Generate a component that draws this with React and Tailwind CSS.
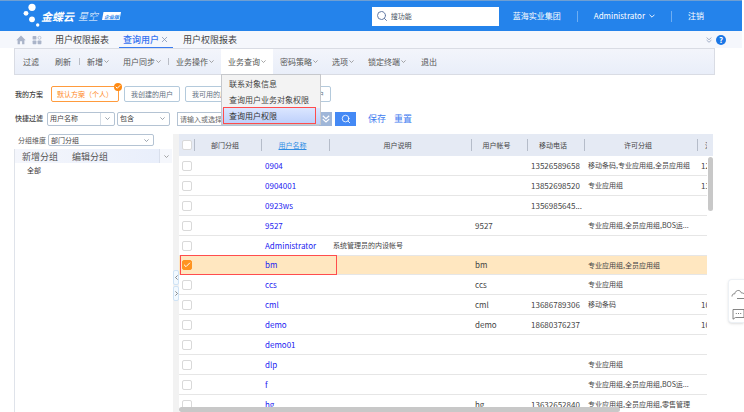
import { Search, X, Check } from 'lucide-react'
import clsx from 'clsx'

const MENUS = [
  { label: '过滤' },
  { label: '刷新', divider: true },
  { label: '新增', arrow: true },
  { label: '用户同步', arrow: true, divider: true },
  { label: '业务操作', arrow: true },
  { label: '业务查询', arrow: true, items: ['联系对象信息', '查询用户业务对象权限', '查询用户权限'] },
  { label: '密码策略', arrow: true },
  { label: '选项', arrow: true },
  { label: '锁定终端', arrow: true },
  { label: '退出' },
]

const USERS = [
  { name: '0904', phone: '13526589658', group: '移动条码,专业应用组,全员应用组', extra: '12' },
  { name: '0904001', phone: '13852698520', group: '专业应用组', extra: '13' },
  { name: '0923ws', phone: '1356985645...' },
  { name: '9527', account: '9527', group: '专业应用组,全员应用组,BOS运...' },
  { name: 'Administrator', desc: '系统管理员的内设帐号' },
  { name: 'bm', account: 'bm', group: '专业应用组,全员应用组', selected: true },
  { name: 'ccs', account: 'ccs', group: '专业应用组' },
  { name: 'cml', account: 'cml', phone: '13686789306', group: '移动条码', extra: '10' },
  { name: 'demo', account: 'demo', phone: '18680376237', extra: '10' },
  { name: 'demo01' },
  { name: 'dlp', group: '专业应用组' },
  { name: 'f', group: '专业应用组,全员应用组,BOS运...' },
  { name: 'hg', account: 'hg', phone: '13632652840', group: '专业应用组,全员应用组,零售管理' },
]

function Arrow({ className }) {
  return (
    <svg viewBox="0 0 10 6" className={clsx('shrink-0', className)} fill="none" stroke="currentColor" strokeWidth="1.5">
      <path d="M.8.8 5 5 9.2.8" />
    </svg>
  )
}

function DoubleArrow({ className }) {
  return (
    <svg viewBox="0 0 10 10" className={clsx('shrink-0', className)} fill="none" stroke="currentColor" strokeWidth="1.5">
      <path d="M1 1 5 4.6 9 1M1 5.2 5 8.8 9 5.2" />
    </svg>
  )
}

function Logo() {
  return (
    <div className="flex items-center text-white">
      <svg viewBox="0 0 18 26" className="w-[18px] h-[26px]" fill="currentColor">
        <circle cx="9" cy="4.3" r="3.6" />
        <circle cx="3" cy="10.3" r="2.4" />
        <circle cx="9" cy="16.3" r="2.9" />
        <circle cx="14.7" cy="22" r="1.7" />
      </svg>
      <span className="text-[11px] font-bold italic">金蝶云</span>
      <span className="ml-1 text-[10px] font-light italic">星空</span>
      <span className="ml-1 flex h-2 w-[19px] items-center justify-center bg-white text-[5px] font-bold italic text-[#2483eb] [clip-path:polygon(8%_0,100%_0,92%_100%,0_100%)]">
        企业版
      </span>
    </div>
  )
}

function Header() {
  return (
    <header className="mr-0.5 flex h-[31px] shrink-0 items-center border-t border-[#6f9fd2] bg-[#2483eb] pl-[23px] text-[8px] text-white">
      <Logo />
      <label className="ml-auto flex h-[19px] w-[127px] items-center bg-white pl-1">
        <Search className="size-3 shrink-0 text-[#647ba5]" />
        <input aria-label="搜功能" placeholder="搜功能"
               className="ml-[3px] w-full min-w-0 text-[7px] text-gray-700 outline-none placeholder:text-gray-600" />
      </label>
      <span className="ml-[14px]">蓝海实业集团</span>
      <span className="ml-4 h-[11px] w-px bg-[#6eaef2]" />
      <button className="ml-4 flex items-center gap-1">
        Administrator
        <Arrow className="h-1 w-[6px]" />
      </button>
      <span className="ml-4 h-[11px] w-px bg-[#6eaef2]" />
      <button className="ml-4 mr-[38px]">注销</button>
    </header>
  )
}

function TabBar() {
  return (
    <nav className="mr-0.5 flex h-[17px] shrink-0 items-center bg-[#f5f7fc] pl-4 text-[9px] text-[#444]">
      <button aria-label="主页">
        <svg viewBox="0 0 10 10" className="size-[10px]" fill="#aab4c9">
          <path d="M5 .6 9.7 5.2H8.4V9.2H6.1V6.3H3.9V9.2H1.6V5.2H.3z" />
        </svg>
      </button>
      <button aria-label="应用" className="ml-1.5">
        <svg viewBox="0 0 10 10" className="size-[10px]" fill="#aab4c9">
          <rect x=".6" y="1" width="3.8" height="3.6" rx=".7" />
          <rect x=".6" y="5.6" width="3.8" height="3.6" rx=".7" />
          <rect x="5.6" y="5.6" width="3.8" height="3.6" rx=".7" />
          <circle cx="7.5" cy="2.8" r="1.5" fill="none" stroke="#aab4c9" strokeWidth=".7" />
        </svg>
      </button>
      <button className="ml-[13px]">用户权限报表</button>
      <div className="ml-[10px] flex h-full w-[54px] items-center justify-center gap-px border-b border-[#3b7cf0] text-[#3573ef]">
        <button className="font-medium">查询用户</button>
        <button aria-label="关闭"><X className="size-[9px] text-[#7d8fb0]" /></button>
      </div>
      <button className="ml-[10px]">用户权限报表</button>
      <DoubleArrow className="ml-auto size-[6px] text-[#9aa7c2]" />
      <button className="ml-1 mr-4 flex size-[10px] items-center justify-center rounded-full bg-[#1b77e6] text-[8px] font-bold text-white">?</button>
    </nav>
  )
}

function DropMenu({ items }) {
  return (
    <div className="absolute left-0 top-full z-20 flex w-[100px] flex-col border border-[#c6c8cc] bg-[#f3f3f3] pt-px text-[8px] text-[#444]">
      {items.map((item, i) => {
        const last = i === items.length - 1
        return (
          <button key={item}
                  className={clsx('relative h-4 pl-[7px] text-left',
                    last && 'bg-linear-to-b from-[#dbe6ff] to-[#bccffb] text-[#333]')}>
            {item}
            {last && <span className="absolute -top-px bottom-0 left-px right-1 border border-[#ff4d4d]" />}
          </button>
        )
      })}
    </div>
  )
}

function Toolbar() {
  return (
    <div className="ml-[14px] mr-[29px] flex h-[27px] shrink-0 border border-[#d9dce4] bg-linear-to-b from-[#f3f5fb] to-[#e9eef9] text-[8px] text-[#555]">
      {MENUS.map(m => (
        <div key={m.label} className="flex items-center">
          <div className={clsx('relative h-full', m.items && 'bg-white')}>
            <button className={clsx('flex h-full items-center gap-px', m.arrow ? 'px-[7px]' : 'px-2')}>
              {m.label}
              {m.arrow && <Arrow className="h-[3px] w-[5px] text-[#888]" />}
            </button>
            {m.items && <DropMenu items={m.items} />}
          </div>
          {m.divider && <span className="h-[7px] w-px bg-[#b9bdc6]" />}
        </div>
      ))}
    </div>
  )
}

function Select({ label, value, className, split }) {
  return (
    <div className={clsx('relative rounded-xs border border-[#b4c3d3] text-[7px] text-[#444]', className)}>
      <select aria-label={label} className="block size-full appearance-none bg-transparent pl-0.5 outline-none">
        <option>{value}</option>
      </select>
      <span className={clsx('pointer-events-none absolute inset-y-0 right-0 flex w-[14px] items-center justify-center',
        split && 'border-l border-[#d5dde6]')}>
        <Arrow className="h-[3px] w-[5px] text-[#7c8794]" />
      </span>
    </div>
  )
}

function Filters() {
  const plan = 'h-full rounded-xs border border-[#b4cadc] px-1.5 text-[#5f6f80]'
  return (
    <div className="shrink-0 pl-[15px] text-[7px] text-[#444]">
      <div className="mt-[11px] flex h-4 items-center gap-[5px]">
        <span className="w-[31px] font-medium">我的方案</span>
        <button className="relative h-full w-[68px] rounded-xs border border-[#ff9b3d] text-[#ff8a1c]">
          默认方案（个人）
          <span className="absolute -right-1 -top-1 flex size-2 items-center justify-center rounded-full bg-[#ff8a12] text-white">
            <Check className="size-[6px]" strokeWidth={4} />
          </span>
        </button>
        <button className={plan}>我创建的用户</button>
        <button className={plan}>我可用的用户</button>
        <button className="h-full w-[85px] rounded-xs border border-[#b4cadc] px-1.5 text-right text-[#5f6f80]">用户</button>
      </div>
      <div className="mt-[9px] flex h-[15px] items-center">
        <span className="w-8 font-medium">快捷过滤</span>
        <Select label="过滤字段" value="用户名称" split className="h-[14px] w-[68px]" />
        <Select label="比较方式" value="包含" className="ml-0.5 h-[14px] w-[53px]" />
        <input aria-label="过滤值" placeholder="请输入或选择"
               className="ml-[7px] h-[14px] w-[142px] border border-[#b4c3d3] pl-0.5 outline-none placeholder:text-[#666]" />
        <button aria-label="更多条件" className="flex h-[14px] w-[13px] items-center justify-center bg-[#9fb6d8] text-white">
          <DoubleArrow className="size-2" />
        </button>
        <button aria-label="搜索" className="ml-[3px] flex h-[14px] w-[21px] items-center justify-center bg-[#4489f5] text-white">
          <Search className="size-[10px]" />
        </button>
        <button className="ml-3 text-[9px] text-[#3f7df0]">保存</button>
        <button className="ml-2 text-[9px] text-[#3f7df0]">重置</button>
      </div>
    </div>
  )
}

function GroupPanel() {
  return (
    <aside className="w-[158px] shrink-0 text-[#555]">
      <div className="flex h-3 items-center pl-1 text-[7px]">
        <span className="w-[30px]">分组维度</span>
        <Select label="分组维度" value="部门分组" className="h-3 w-[106px]" />
      </div>
      <div className="mt-[3px] h-full border-l border-[#dfe3ea]">
        <div className="flex h-[14px] items-center bg-linear-to-r from-[#f4f6fc] to-[#e8eefb] pl-[7px] text-[9px]">
          <button>新增分组</button>
          <button className="ml-[14px]">编辑分组</button>
          <button aria-label="更多" className="ml-auto flex h-full w-[13px] items-center justify-center border-l border-[#d9dfec] bg-[#f5f7fc]">
            <Arrow className="h-[3px] w-[5px] text-[#888]" />
          </button>
        </div>
        <button className="block pl-3 pt-px text-[7px] leading-[12px] text-[#333]">全部</button>
      </div>
    </aside>
  )
}

function Splitter() {
  const knob = 'flex h-[15px] w-[6px] items-center justify-center rounded-xs border border-[#cfe3f5] bg-[#f2f9ff] text-[#666]'
  return (
    <div className="ml-px flex w-[6px] shrink-0 flex-col gap-px bg-[#f2f2f2] pt-[136px]">
      <button aria-label="收起" className={knob}><Arrow className="h-[3px] w-[5px] rotate-90" /></button>
      <button aria-label="展开" className={knob}><Arrow className="h-[3px] w-[5px] -rotate-90" /></button>
    </div>
  )
}

function Tick({ label, checked }) {
  return (
    <span className="relative ml-[3px] block size-[10px]">
      <input type="checkbox" aria-label={label} defaultChecked={checked}
             className="block size-full appearance-none rounded-xs border border-[#d9d9d9] bg-white checked:border-[#ff9320] checked:bg-[#ff9320]" />
      {checked && <Check className="pointer-events-none absolute inset-px size-2 text-white" strokeWidth={3} />}
    </span>
  )
}

function HeadCell({ children }) {
  return (
    <th className="p-0 font-normal">
      <div className="flex h-3 items-center border-r border-[#b5bcc9]">
        <span className="w-full pr-[6px] text-center">{children}</span>
      </div>
    </th>
  )
}

function UserTable() {
  return (
    <div className="relative min-w-0 flex-1 overflow-hidden">
      <table className="w-full table-fixed border-separate border-spacing-0 text-[8px] text-[#444]">
        <colgroup>
          <col className="w-4" />
          <col className="w-[67px]" />
          <col className="w-[68px]" />
          <col />
          <col className="w-[56px]" />
          <col className="w-[57px]" />
          <col className="w-[113px]" />
          <col className="w-[9px]" />
          <col className="w-[6px]" />
        </colgroup>
        <thead>
          <tr className="h-[22px] bg-[#e5eaf4] text-[7px]">
            <th className="p-0">
              <div className="flex h-3 items-center border-r border-[#b5bcc9]"><Tick label="全选" /></div>
            </th>
            <HeadCell>部门分组</HeadCell>
            <HeadCell><a href="#" className="text-[#2f8de4] underline">用户名称</a></HeadCell>
            <HeadCell>用户说明</HeadCell>
            <HeadCell>用户帐号</HeadCell>
            <HeadCell>移动电话</HeadCell>
            <HeadCell>许可分组</HeadCell>
            <th className="overflow-hidden p-0 pl-[7px] text-left font-normal">注</th>
            <th className="p-0" />
          </tr>
        </thead>
        <tbody>
          {USERS.map(u => {
            const cell = clsx('overflow-hidden whitespace-nowrap border-b border-[#e6e6e6] p-0 pl-[3px]',
              u.selected && 'bg-[#ffe7c0]')
            return (
              <tr key={u.name} className={u.selected ? 'h-[19px]' : 'h-5'}>
                <td className={clsx('relative border-b border-[#e6e6e6] p-0', u.selected && 'bg-[#ffe7c0]')}>
                  <Tick label={u.name} checked={u.selected} />
                  {u.selected && <span className="pointer-events-none absolute -bottom-px -top-px left-px z-10 w-[157px] border border-[#ff4d4d]" />}
                </td>
                <td className={cell} />
                <td className={cell}><a href="#" className="text-[#2222f0]">{u.name}</a></td>
                <td className={clsx(cell, 'text-[7px]')}>{u.desc}</td>
                <td className={cell}>{u.account}</td>
                <td className={cell}>{u.phone}</td>
                <td className={clsx(cell, 'text-[7px]')}>{u.group}</td>
                <td className={cell}>{u.extra}</td>
                <td className="p-0" />
              </tr>
            )
          })}
        </tbody>
      </table>
      <div className="absolute right-0 top-[23px] h-[54px] w-[5px] rounded-full bg-[#c8c8c8]" />
      <div className="absolute bottom-0 left-0 right-[93px] h-[5px] rounded-full bg-[#c8c8c8]" />
    </div>
  )
}

function SideWidget() {
  return (
    <div className="absolute right-0 top-[279px] flex h-11 w-4 flex-col gap-2 rounded-l-sm border border-r-0 border-[#edf1f5] bg-white pl-0.5 pt-[9px] shadow-sm">
      <svg viewBox="0 0 14 11" className="h-[11px] w-[14px] shrink-0" fill="none" stroke="#777" strokeWidth=".9">
        <path d="M1 7.5C1 5.2 2.5 4.6 3.7 4.9 4.2 2.4 6 1.2 7.8 1.5 9.5 1.8 10 3 10.4 4 12 3.8 13 4.5 13.5 5.5M6 9.5h8" />
      </svg>
      <svg viewBox="0 0 14 12" className="h-3 w-[14px] shrink-0" fill="none" stroke="#777" strokeWidth=".9">
        <path d="M2 1.5H13V9.5H4.5L2 11.2Z" />
        <path d="M4.8 5.5h1M7 5.5h1M9.2 5.5h1" strokeWidth="1.2" />
      </svg>
    </div>
  )
}

export default function App() {
  return (
    <div className="relative flex h-screen flex-col overflow-hidden bg-white font-['Noto_Sans_CJK_SC',sans-serif] leading-none">
      <Header />
      <TabBar />
      <Toolbar />
      <Filters />
      <main className="ml-[14px] mr-[31px] mt-2 flex min-h-0 flex-1 overflow-hidden">
        <GroupPanel />
        <Splitter />
        <UserTable />
      </main>
      <SideWidget />
    </div>
  )
}
